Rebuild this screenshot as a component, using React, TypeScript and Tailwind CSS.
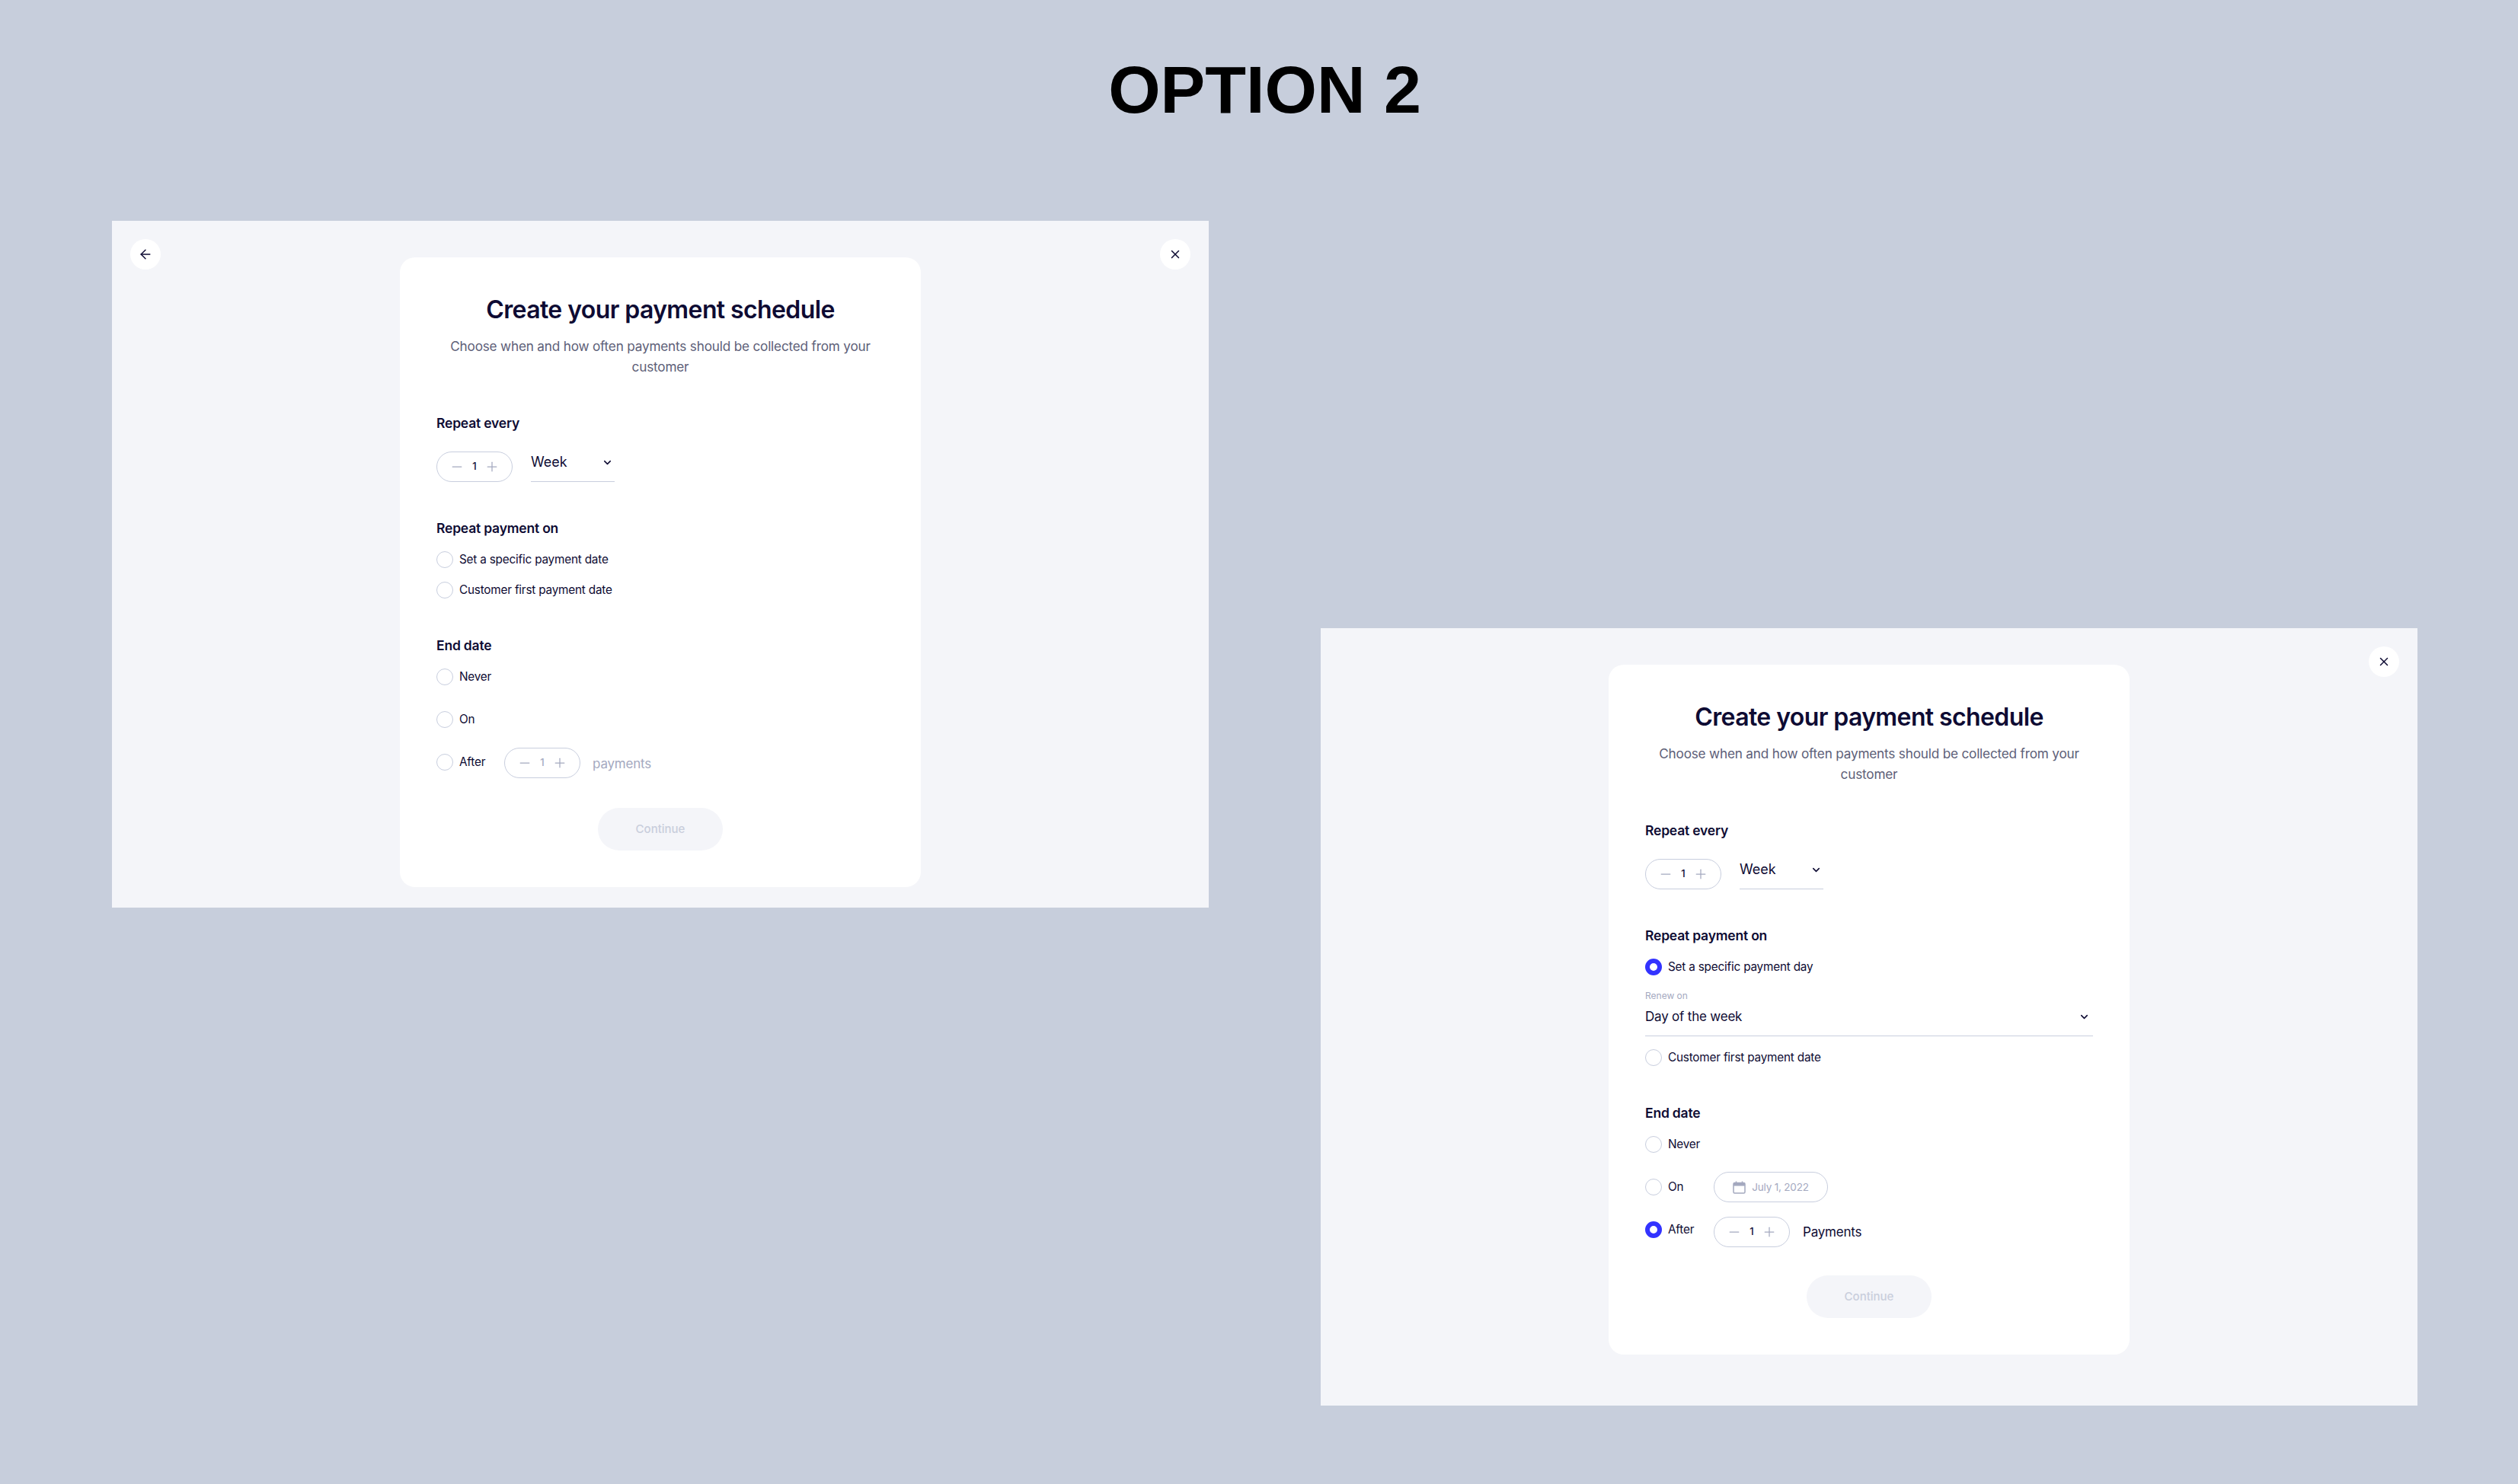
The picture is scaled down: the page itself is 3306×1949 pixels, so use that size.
import { ArrowLeft, ChevronDown, Minus, Plus, X } from 'lucide-react';
import type { ReactNode } from 'react';

const font = 'font-["Inter","Noto_Sans",sans-serif]';

function RoundButton({ side, children }: { side: 'left' | 'right'; children: ReactNode }) {
  return (
    <button
      className={`absolute top-6 flex h-10 w-10 items-center justify-center rounded-full bg-white text-[#0e0b33] ${
        side === 'left' ? 'left-6' : 'right-6'
      }`}
    >
      {children}
    </button>
  );
}

function Radio({ label, checked = false }: { label: string; checked?: boolean }) {
  return (
    <label className="flex h-6 items-center gap-2">
      <span
        className={`block h-[22px] w-[22px] shrink-0 rounded-full bg-white ${
          checked ? 'border-[6px] border-[#3333ff]' : 'border border-[#c8cede]'
        }`}
      />
      <span className="text-[15.3px] leading-6 tracking-[-0.2px] text-[#0e0b33]">{label}</span>
    </label>
  );
}

function Stepper({ muted = false }: { muted?: boolean }) {
  return (
    <div className="flex h-10 w-[100px] shrink-0 items-center justify-center gap-2 rounded-full border border-[#c8cede] bg-white text-[#a4a9bf]">
      <Minus size={20} strokeWidth={1.5} />
      <span className={`w-[10px] text-center text-[13px] font-medium ${muted ? 'text-[#a4a9bf]' : 'text-[#0e0b33]'}`}>1</span>
      <Plus size={20} strokeWidth={1.5} />
    </div>
  );
}

function SectionLabel({ children, className }: { children: ReactNode; className: string }) {
  return <h3 className={`h-6 text-[17.5px] font-semibold leading-6 tracking-[-0.2px] text-[#0e0b33] ${className}`}>{children}</h3>;
}

function CalendarIcon() {
  return (
    <svg width="17" height="17" viewBox="0 0 17 17" fill="none" className="shrink-0">
      <rect x="1" y="2.5" width="15" height="13.5" rx="1.5" stroke="#a4a9bf" strokeWidth="1.5" />
      <rect x="1" y="2.5" width="15" height="4" fill="#a4a9bf" />
      <path d="M4.5 0.5v3M12.5 0.5v3" stroke="#a4a9bf" strokeWidth="1.5" />
    </svg>
  );
}

function CardHeader() {
  return (
    <>
      <h2 className="h-[42px] text-center text-[32px] font-semibold leading-[42px] tracking-[-0.6px] text-[#0e0b33]">
        Create your payment schedule
      </h2>
      <p className="mt-[13px] text-center text-[17.2px] leading-[27px] tracking-[-0.2px] text-[#5d6078]">
        Choose when and how often payments should be collected from your customer
      </p>
      <SectionLabel className="mt-[49px]">Repeat every</SectionLabel>
      <div className="mt-[25px] flex gap-6">
        <Stepper />
        <div className="flex h-10 w-[110px] items-start justify-between border-b border-[#c8cede] pr-[2px] pt-[1px] text-[#0e0b33]">
          <span className="text-[18px] leading-[26px]">Week</span>
          <ChevronDown size={15} strokeWidth={2.5} className="mt-[6px]" />
        </div>
      </div>
      <SectionLabel className="mt-[49px]">Repeat payment on</SectionLabel>
    </>
  );
}

function ContinueButton({ className }: { className: string }) {
  return (
    <button className={`mx-auto block h-14 w-[164px] rounded-full bg-[#f4f5f9] text-[15px] font-medium text-[#c9cedc] ${className}`}>
      Continue
    </button>
  );
}

function FirstCard() {
  return (
    <section className="w-[684px] rounded-[20px] bg-white px-12 py-12">
      <CardHeader />
      <div className="mt-[17px] flex flex-col gap-4">
        <Radio label="Set a specific payment date" />
        <Radio label="Customer first payment date" />
      </div>
      <SectionLabel className="mt-[49px]">End date</SectionLabel>
      <div className="mt-[17px]">
        <Radio label="Never" />
      </div>
      <div className="mt-8">
        <Radio label="On" />
      </div>
      <div className="mt-[25px] flex h-10 items-start">
        <div className="mt-[7px] w-[89px]">
          <Radio label="After" />
        </div>
        <Stepper muted />
        <span className="ml-4 text-[17px] leading-[42px] tracking-[-0.2px] text-[#a4a9bf]">payments</span>
      </div>
      <ContinueButton className="mt-[39px]" />
    </section>
  );
}

function SecondCard() {
  return (
    <section className="w-[684px] rounded-[20px] bg-white px-12 py-12">
      <CardHeader />
      <div className="mt-[17px]">
        <Radio label="Set a specific payment day" checked />
      </div>
      <div className="mt-[18px] h-4 text-[12px] leading-4 text-[#a4a9bf]">Renew on</div>
      <div className="flex h-[45px] items-start justify-between border-b border-[#c8cede] pr-[4px] pt-[6px] text-[#0e0b33]">
        <span className="text-[17px] leading-[26px] tracking-[-0.2px]">Day of the week</span>
        <ChevronDown size={15} strokeWidth={2.5} className="mt-[6px]" />
      </div>
      <div className="mt-4">
        <Radio label="Customer first payment date" />
      </div>
      <SectionLabel className="mt-[49px]">End date</SectionLabel>
      <div className="mt-[17px]">
        <Radio label="Never" />
      </div>
      <div className="mt-6 flex h-10 items-center">
        <div className="w-[90px]">
          <Radio label="On" />
        </div>
        <div className="flex h-10 w-[150px] items-center justify-center gap-2 rounded-full border border-[#c8cede] bg-white">
          <CalendarIcon />
          <span className="text-[13.5px] tracking-[-0.2px] text-[#a4a9bf]">July 1, 2022</span>
        </div>
      </div>
      <div className="mt-[19px] flex h-10 items-start">
        <div className="mt-[5px] w-[90px]">
          <Radio label="After" checked />
        </div>
        <Stepper />
        <span className="ml-[17px] text-[17px] leading-10 tracking-[-0.2px] text-[#0e0b33]">Payments</span>
      </div>
      <ContinueButton className="mt-[37px]" />
    </section>
  );
}

export default function App() {
  return (
    <div className={`h-[1949px] w-[3306px] bg-[#c7cedc] pl-[147px] pt-[68px] ${font}`}>
      <div className="w-[3027px]">
        <h1 className='h-[100px] text-center font-["Liberation_Sans",sans-serif] text-[88px] font-bold leading-[100px] text-black'>
          OPTION 2
        </h1>
        <div className="mt-[122px] flex items-start gap-[147px]">
          <div className="relative flex w-[1440px] justify-center bg-[#f4f5f9] pb-[27px] pt-12">
            <RoundButton side="left">
              <ArrowLeft size={20} strokeWidth={1.75} />
            </RoundButton>
            <RoundButton side="right">
              <X size={18} strokeWidth={2} />
            </RoundButton>
            <FirstCard />
          </div>
          <div className="relative mt-[535px] flex w-[1440px] justify-center bg-[#f4f5f9] pb-[67px] pt-12">
            <RoundButton side="right">
              <X size={18} strokeWidth={2} />
            </RoundButton>
            <SecondCard />
          </div>
        </div>
      </div>
    </div>
  );
}
